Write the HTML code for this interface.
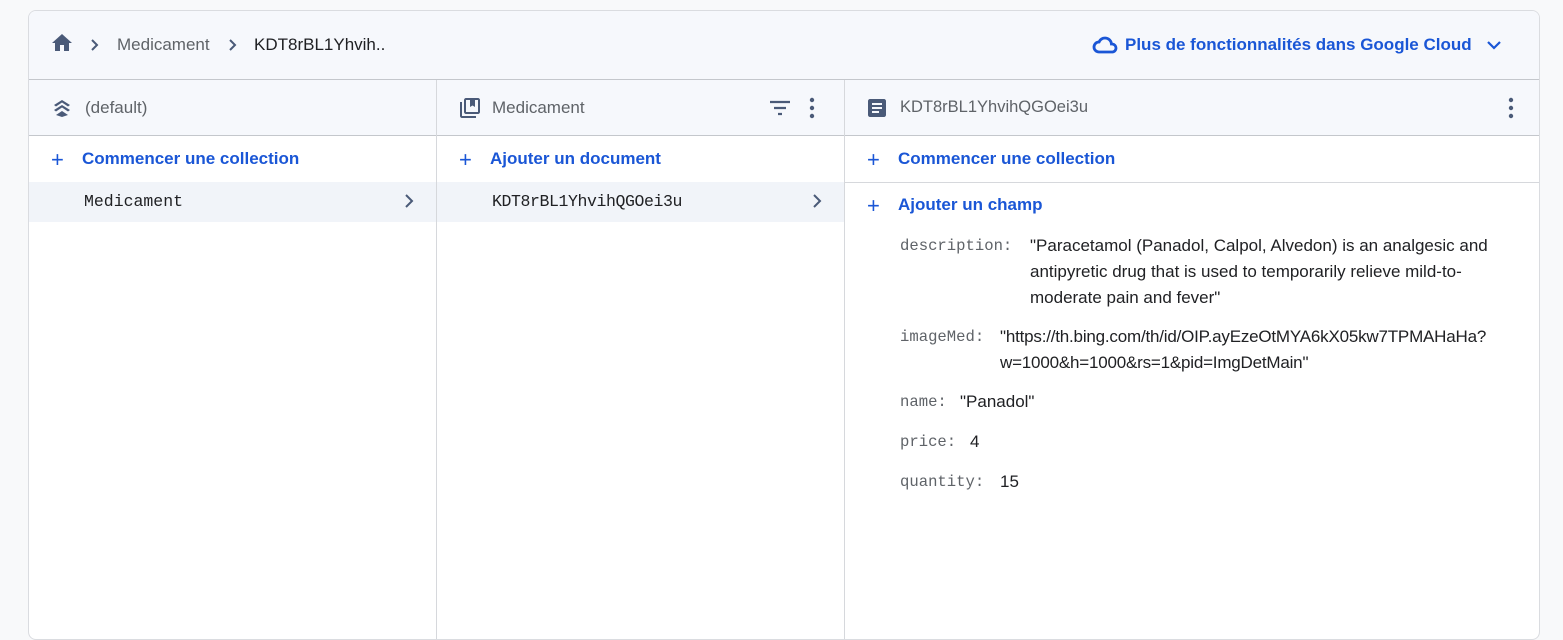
<!DOCTYPE html>
<html><head><meta charset="utf-8"><style>
*{box-sizing:border-box;margin:0;padding:0}
body{width:1563px;height:627px;overflow:hidden;background:#f8f9fa;font-family:"Liberation Sans",sans-serif;position:relative}
.card{position:absolute;left:28px;top:10px;width:1512px;height:630px;background:#fff;border:1px solid #dadce0;border-radius:8px;overflow:hidden}
.hdr{position:absolute;left:0;top:0;width:100%;height:69px;background:#f6f8fc;border-bottom:1px solid #c4c7cc}
.abs{position:absolute;white-space:nowrap}
.col{position:absolute;top:69px;bottom:0;border-right:1px solid #d6d8dc}
.ch{position:absolute;left:0;top:0;width:100%;height:56px;background:#f6f8fc;border-bottom:1px solid #c4c7cc}
.blue{color:#1a56d6;font-size:17px;font-weight:bold}
.gray{color:#5f6368;font-size:17px}
.mono{font-family:"Liberation Mono",monospace}
.key{font-family:"Liberation Mono",monospace;color:#5f6368;font-size:15.6px}
.val{font-size:17px;color:#202124;line-height:26px}
</style></head><body>
<div class="card">
 <div class="hdr">
  <svg class="abs" style="left:20px;top:20px" width="26" height="24" viewBox="0 0 24 24"><path d="M10 20v-6h4v6h5v-8h3L12 3 2 12h3v8z" fill="#4a5a78"/></svg>
  <svg class="abs" style="left:60px;top:27px" width="12" height="14" viewBox="0 0 12 14"><path d="M3 2l5 5-5 5" stroke="#4a5a78" stroke-width="2" fill="none"/></svg>
  <div class="abs gray" style="left:88px;top:24px;font-size:17px">Medicament</div>
  <svg class="abs" style="left:198px;top:27px" width="12" height="14" viewBox="0 0 12 14"><path d="M3 2l5 5-5 5" stroke="#4a5a78" stroke-width="2" fill="none"/></svg>
  <div class="abs" style="left:225px;top:24px;font-size:17px;color:#202124">KDT8rBL1Yhvih..</div>
  <svg class="abs" style="left:1062px;top:22px" width="28" height="24" viewBox="0 0 24 24"><path d="M19.35 10.04A7.49 7.49 0 0 0 12 4C9.11 4 6.6 5.64 5.35 8.04A5.994 5.994 0 0 0 0 14c0 3.31 2.69 6 6 6h13c2.76 0 5-2.24 5-5 0-2.64-2.05-4.78-4.65-4.96zM19 18H6c-2.21 0-4-1.79-4-4s1.79-4 4-4h.71C7.37 7.69 9.48 6 12 6c3.04 0 5.5 2.46 5.5 5.5v.5H19c1.66 0 3 1.34 3 3s-1.34 3-3 3z" fill="#1a56d6" stroke="#1a56d6" stroke-width="0.8"/></svg>
  <div class="abs blue" style="left:1096px;top:24px;font-size:17px">Plus de fonctionnalités dans Google Cloud</div>
  <svg class="abs" style="left:1456px;top:28px" width="18" height="12" viewBox="0 0 18 12"><path d="M3 3l6 6 6-6" stroke="#1a56d6" stroke-width="2.2" fill="none"/></svg>
 </div>
 <div class="col" style="left:0;width:408px">
  <div class="ch">
   <svg class="abs" style="left:22px;top:17px" width="22" height="22" viewBox="0 0 22 22"><path d="M3 8l8-5 8 5-2 1.5-6-4-6 4zM3 13l8-5 8 5-2 1.5-6-4-6 4zM5 18l6-4 6 4-6 2z" fill="#4a5a78"/></svg>
   <div class="abs gray" style="left:56px;top:18px">(default)</div>
  </div>
  <div class="abs blue" style="left:22px;top:67px;font-weight:normal;font-size:22px">+</div>
  <div class="abs blue" style="left:53px;top:69px">Commencer une collection</div>
  <div class="abs" style="left:0;top:102px;width:407px;height:40px;background:#f1f4f9"></div>
  <div class="abs mono" style="left:55px;top:112px;font-size:16.5px;color:#202124">Medicament</div>
  <svg class="abs" style="left:374px;top:113px" width="12" height="16" viewBox="0 0 12 16"><path d="M3 2l6 6-6 6" stroke="#4a5a78" stroke-width="2" fill="none"/></svg>
 </div>
 <div class="col" style="left:408px;width:408px">
  <div class="ch">
   <svg class="abs" style="left:21px;top:16px" width="24" height="24" viewBox="0 0 24 24"><path d="M4 6H2v14c0 1.1.9 2 2 2h14v-2H4V6zm16-4H8c-1.1 0-2 .9-2 2v12c0 1.1.9 2 2 2h12c1.1 0 2-.9 2-2V4c0-1.1-.9-2-2-2zm0 14H8V4h4v7l2.5-1.5L17 11V4h3v12z" fill="#4a5a78"/></svg>
   <div class="abs gray" style="left:55px;top:18px">Medicament</div>
   <svg class="abs" style="left:331px;top:18px" width="24" height="20" viewBox="0 0 24 20"><path d="M2 4h20M6 10h12M10 16h4" stroke="#4a5a78" stroke-width="2.2"/></svg>
   <svg class="abs" style="left:370px;top:16px" width="10" height="24" viewBox="0 0 10 24"><circle cx="5" cy="4" r="2.2" fill="#4a5a78"/><circle cx="5" cy="12" r="2.2" fill="#4a5a78"/><circle cx="5" cy="20" r="2.2" fill="#4a5a78"/></svg>
  </div>
  <div class="abs blue" style="left:22px;top:67px;font-weight:normal;font-size:22px">+</div>
  <div class="abs blue" style="left:53px;top:69px">Ajouter un document</div>
  <div class="abs" style="left:0;top:102px;width:407px;height:40px;background:#f1f4f9"></div>
  <div class="abs mono" style="left:55px;top:112px;font-size:16.5px;color:#202124;letter-spacing:-0.4px">KDT8rBL1YhvihQGOei3u</div>
  <svg class="abs" style="left:374px;top:113px" width="12" height="16" viewBox="0 0 12 16"><path d="M3 2l6 6-6 6" stroke="#4a5a78" stroke-width="2" fill="none"/></svg>
 </div>
 <div class="col" style="left:816px;width:695px;border-right:none">
  <div class="ch">
   <svg class="abs" style="left:20px;top:16px" width="24" height="24" viewBox="0 0 24 24"><path d="M19 3H5c-1.1 0-2 .9-2 2v14c0 1.1.9 2 2 2h14c1.1 0 2-.9 2-2V5c0-1.1-.9-2-2-2zm-5 14H7v-2h7v2zm3-4H7v-2h10v2zm0-4H7V7h10v2z" fill="#4a5a78"/></svg>
   <div class="abs gray" style="left:55px;top:18px;font-size:16.5px">KDT8rBL1YhvihQGOei3u</div>
   <svg class="abs" style="left:661px;top:16px" width="10" height="24" viewBox="0 0 10 24"><circle cx="5" cy="4" r="2.2" fill="#4a5a78"/><circle cx="5" cy="12" r="2.2" fill="#4a5a78"/><circle cx="5" cy="20" r="2.2" fill="#4a5a78"/></svg>
  </div>
  <div class="abs blue" style="left:22px;top:67px;font-weight:normal;font-size:22px">+</div>
  <div class="abs blue" style="left:53px;top:69px">Commencer une collection</div>
  <div class="abs" style="left:0;top:102px;width:695px;height:1px;background:#d6d8dc"></div>
  <div class="abs blue" style="left:22px;top:113px;font-weight:normal;font-size:22px">+</div>
  <div class="abs blue" style="left:53px;top:115px">Ajouter un champ</div>
  <div class="abs key" style="left:55px;top:157px">description:</div>
  <div class="abs val" style="left:185px;top:153px">"Paracetamol (Panadol, Calpol, Alvedon) is an analgesic and<br>antipyretic drug that is used to temporarily relieve mild-to-<br>moderate pain and fever"</div>
  <div class="abs key" style="left:55px;top:248px">imageMed:</div>
  <div class="abs val" style="left:155px;top:244px;letter-spacing:-0.2px">"https://th.bing.com/th/id/OIP.ayEzeOtMYA6kX05kw7TPMAHaHa?<br>w=1000&amp;h=1000&amp;rs=1&amp;pid=ImgDetMain"</div>
  <div class="abs key" style="left:55px;top:313px">name:</div>
  <div class="abs val" style="left:115px;top:309px">"Panadol"</div>
  <div class="abs key" style="left:55px;top:353px">price:</div>
  <div class="abs val" style="left:125px;top:349px">4</div>
  <div class="abs key" style="left:55px;top:393px">quantity:</div>
  <div class="abs val" style="left:155px;top:389px">15</div>
 </div>
</div>
</body></html>
